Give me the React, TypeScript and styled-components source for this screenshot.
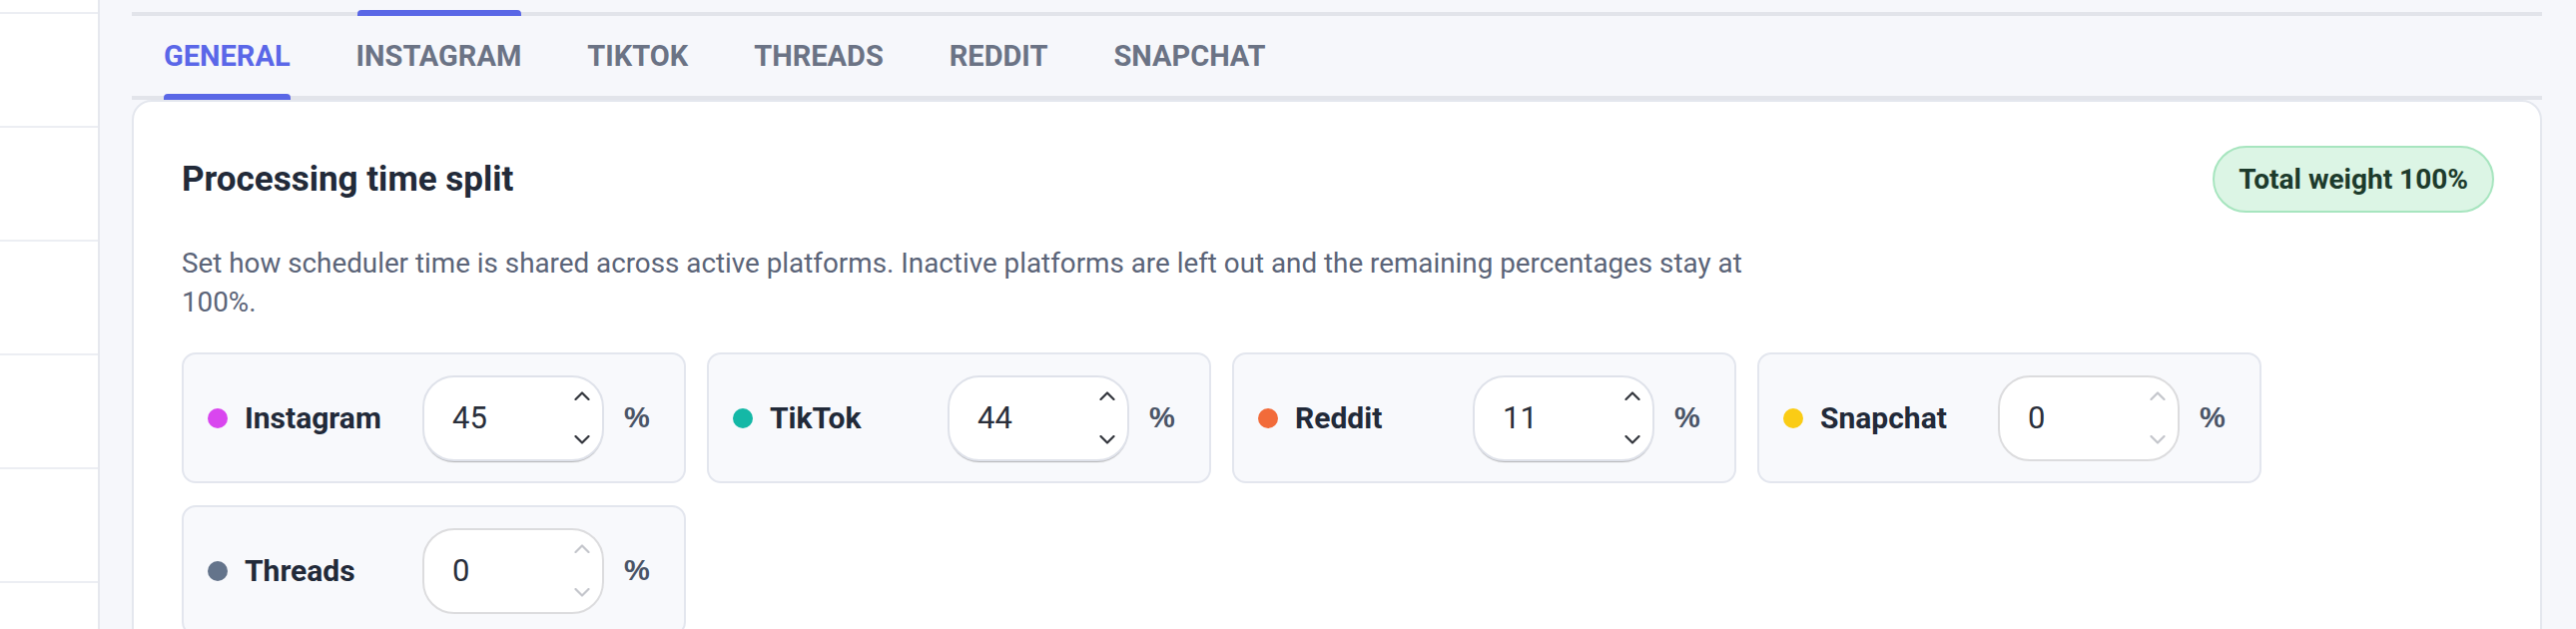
import React from 'react';
import styled, { createGlobalStyle, css } from 'styled-components';

type Platform = {
  name: string;
  color: string;
  value: number;
  active: boolean;
};

const platforms: Platform[] = [
  { name: 'Instagram', color: '#d946ef', value: 45, active: true },
  { name: 'TikTok', color: '#14b8a6', value: 44, active: true },
  { name: 'Reddit', color: '#f26b3a', value: 11, active: true },
  { name: 'Snapchat', color: '#facc15', value: 0, active: false },
  { name: 'Threads', color: '#64748b', value: 0, active: false },
];

const tabs = ['GENERAL', 'INSTAGRAM', 'TIKTOK', 'THREADS', 'REDDIT', 'SNAPCHAT'];

const GlobalStyle = createGlobalStyle`
  html, body {
    margin: 0;
    padding: 0;
  }
  body {
    background: #f6f7fb;
    font-family: Roboto, 'Liberation Sans', Arial, sans-serif;
    -webkit-font-smoothing: antialiased;
  }
`;

const Page = styled.div`
  display: flex;
  width: 2580px;
  height: 630px;
  overflow: hidden;
  background: #f6f7fb;
`;

const Sidebar = styled.aside`
  flex: 0 0 98px;
  background: #ffffff;
  border-right: 2px solid #e6e8ee;
  padding-top: 12px;
`;

const SideRow = styled.div`
  height: 112px;
  border-top: 2px solid #eceef3;
`;

const Main = styled.main`
  flex: 1;
  min-width: 0;
  padding: 12px 34px 0 32px;
`;

const Rail = styled.div`
  position: relative;
  height: 4px;
  background: #e2e4ea;
`;

const RailMarker = styled.span`
  position: absolute;
  left: 226px;
  bottom: 0;
  width: 164px;
  height: 6px;
  border-radius: 4px 4px 0 0;
  background: #5a67e6;
`;

const TabBar = styled.nav`
  display: flex;
  gap: 66px;
  height: 80px;
  padding-left: 32px;
  border-bottom: 4px solid #e2e4ea;
`;

const Tab = styled.button<{ $active?: boolean }>`
  position: relative;
  padding: 0;
  border: 0;
  background: none;
  cursor: pointer;
  font-family: Roboto, sans-serif;
  font-weight: 700;
  font-size: 29px;
  line-height: 80px;
  color: ${({ $active }) => ($active ? '#5b67e8' : '#6b7385')};
  ${({ $active }) =>
    $active &&
    css`
      &::after {
        content: '';
        position: absolute;
        left: 0;
        right: 0;
        bottom: -4px;
        height: 6px;
        border-radius: 4px 4px 0 0;
        background: #5a67e6;
      }
    `}
`;

const Panel = styled.section`
  background: #ffffff;
  border: 2px solid #e4e7ee;
  border-radius: 20px;
  padding: 44px 46px 60px 48px;
`;

const PanelHeader = styled.header`
  display: flex;
  align-items: center;
  justify-content: space-between;
`;

const Title = styled.h2`
  margin: 0;
  font-size: 35px;
  font-weight: 700;
  line-height: 1.2;
  color: #222a39;
`;

const WeightBadge = styled.span`
  display: inline-flex;
  align-items: center;
  height: 67px;
  box-sizing: border-box;
  padding: 0 24px;
  border: 2px solid #a7e5bf;
  border-radius: 999px;
  background: #dcf5e5;
  font-size: 28px;
  font-weight: 700;
  color: #1d3b2c;
`;

const Description = styled.p`
  margin: 31px 0 0;
  max-width: 1640px;
  font-size: 27.8px;
  line-height: 39px;
  color: #5b6478;
`;

const PlatformGrid = styled.div`
  display: flex;
  flex-wrap: wrap;
  gap: 22px 21px;
  margin-top: 31px;
`;

const PlatformCard = styled.div`
  display: flex;
  align-items: center;
  width: 505px;
  height: 131px;
  box-sizing: border-box;
  padding: 0 24px;
  border: 2px solid #e3e6ee;
  border-radius: 14px;
  background: #f8f9fc;
`;

const Dot = styled.span<{ $color: string }>`
  flex: 0 0 20px;
  height: 20px;
  border-radius: 50%;
  background: ${({ $color }) => $color};
`;

const PlatformName = styled.span`
  flex: 0 0 160px;
  margin: 0 18px 0 17px;
  font-size: 30px;
  font-weight: 700;
  color: #222a39;
`;

const NumberField = styled.div<{ $disabled?: boolean }>`
  display: flex;
  align-items: center;
  width: 182px;
  height: 86px;
  box-sizing: border-box;
  padding: 0 12px 0 28px;
  border: 2px solid ${({ $disabled }) => ($disabled ? '#dcdcde' : '#dfe2ea')};
  border-radius: 32px;
  background: #ffffff;
  box-shadow: ${({ $disabled }) => ($disabled ? 'none' : '0 2px 1px -1px rgba(0, 0, 0, 0.28)')};
`;

const ValueInput = styled.input`
  flex: 1;
  min-width: 0;
  padding: 0;
  border: 0;
  outline: none;
  background: transparent;
  font-family: Roboto, sans-serif;
  font-size: 31px;
  color: #2a2f3b;
`;

const Stepper = styled.div<{ $disabled?: boolean }>`
  display: flex;
  flex-direction: column;
  justify-content: space-between;
  height: 53px;
  color: ${({ $disabled }) => ($disabled ? '#c4c6cc' : '#33363d')};
`;

const Percent = styled.span`
  margin-left: 20px;
  font-family: 'Liberation Sans', Arial, sans-serif;
  font-size: 29px;
  font-weight: 700;
  color: #4b5567;
`;

const Chevron = ({ down }: { down?: boolean }) => (
  <svg width="16" height="9" viewBox="0 0 16 9" fill="none">
    <polyline
      points={down ? '1.5,1 8,7.5 14.5,1' : '1.5,8 8,1.5 14.5,8'}
      stroke="currentColor"
      strokeWidth="2.2"
      strokeLinecap="round"
      strokeLinejoin="round"
    />
  </svg>
);

export default function App() {
  return (
    <>
      <GlobalStyle />
      <Page>
        <Sidebar>
          {Array.from({ length: 6 }).map((_, i) => (
            <SideRow key={i} />
          ))}
        </Sidebar>
        <Main>
          <Rail>
            <RailMarker />
          </Rail>
          <TabBar>
            {tabs.map((t, i) => (
              <Tab key={t} $active={i === 0}>
                {t}
              </Tab>
            ))}
          </TabBar>
          <Panel>
            <PanelHeader>
              <Title>Processing time split</Title>
              <WeightBadge>Total weight 100%</WeightBadge>
            </PanelHeader>
            <Description>
              Set how scheduler time is shared across active platforms. Inactive platforms are left out and the
              remaining percentages stay at 100%.
            </Description>
            <PlatformGrid>
              {platforms.map((p) => (
                <PlatformCard key={p.name}>
                  <Dot $color={p.color} />
                  <PlatformName>{p.name}</PlatformName>
                  <NumberField $disabled={!p.active}>
                    <ValueInput readOnly value={p.value} disabled={!p.active} />
                    <Stepper $disabled={!p.active}>
                      <Chevron />
                      <Chevron down />
                    </Stepper>
                  </NumberField>
                  <Percent>%</Percent>
                </PlatformCard>
              ))}
            </PlatformGrid>
          </Panel>
        </Main>
      </Page>
    </>
  );
}
